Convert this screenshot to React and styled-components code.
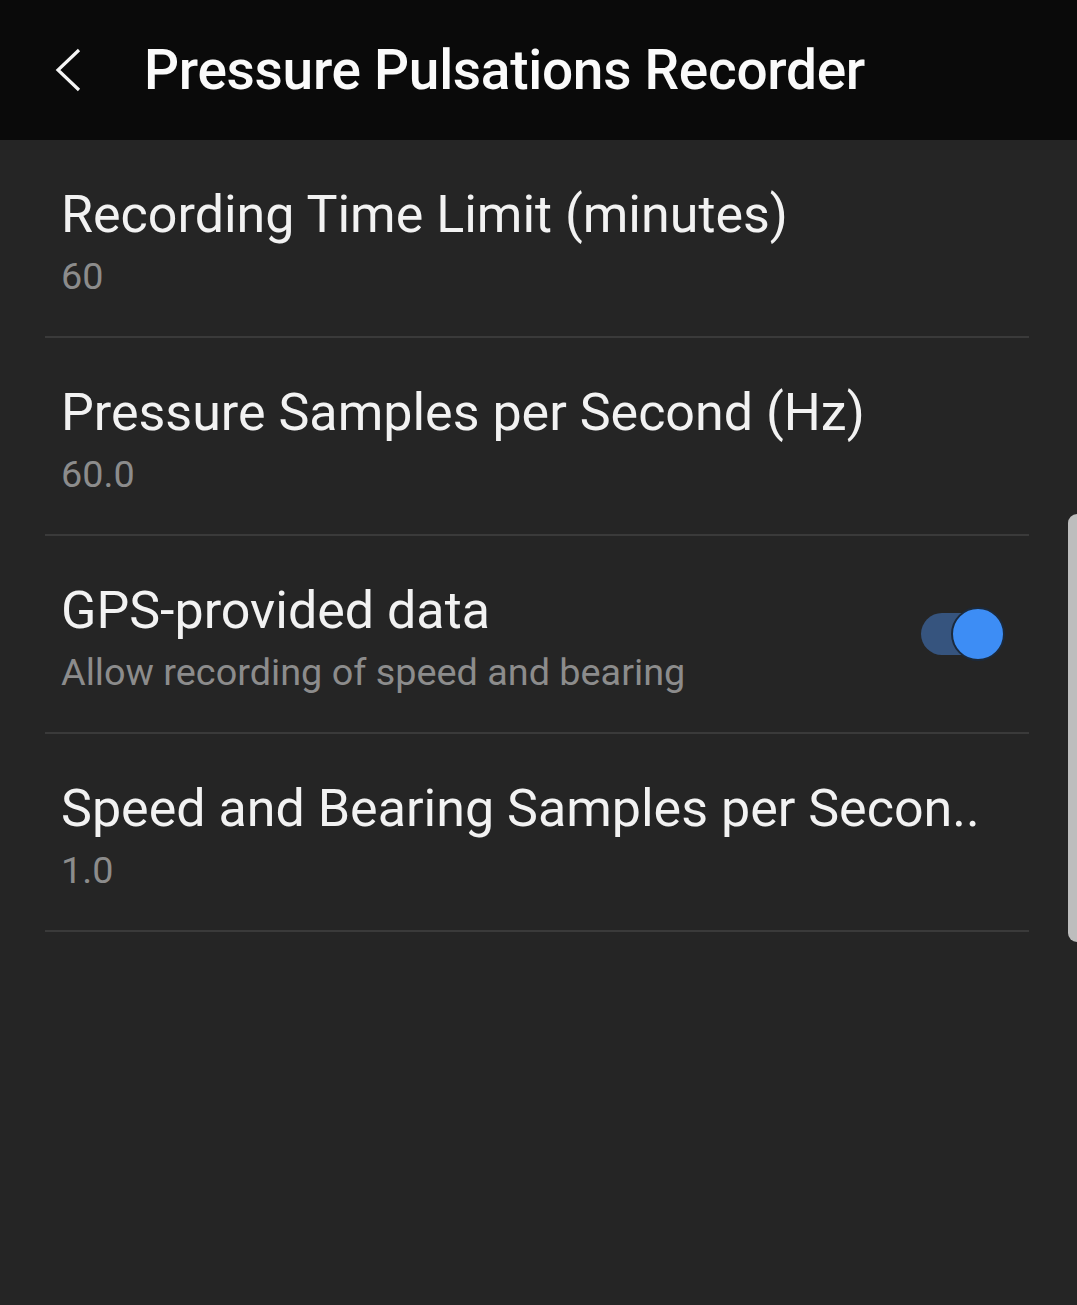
import React, { useState } from 'react'
import styled, { createGlobalStyle } from 'styled-components'

const GlobalStyle = createGlobalStyle`
  html, body {
    margin: 0;
    padding: 0;
    background: #252525;
  }
  body {
    font-family: Roboto, "Noto Sans", sans-serif;
  }
`

const Screen = styled.div`
  position: relative;
  width: 1077px;
  height: 1305px;
  background: #252525;
  overflow: hidden;
`

const TopBar = styled.header`
  display: flex;
  align-items: center;
  height: 140px;
  background: #0a0a0a;
  padding-left: 52px;
  box-sizing: border-box;
`

const BackButton = styled.button`
  display: flex;
  align-items: center;
  justify-content: center;
  width: 32px;
  height: 48px;
  padding: 0;
  border: none;
  background: none;
  margin-right: 60px;
`

const Title = styled.h1`
  margin: 0;
  color: #fafafa;
  font-size: 55px;
  font-weight: 500;
  letter-spacing: -0.3px;
`

const List = styled.div`
  display: flex;
  flex-direction: column;
  padding: 0 48px 0 45px;
`

const Row = styled.div`
  display: flex;
  align-items: center;
  justify-content: space-between;
  height: 198px;
  box-sizing: border-box;
  padding: 9px 24px 0 16px;
  border-bottom: 2px solid #3a3a3a;
`

const Texts = styled.div`
  display: flex;
  flex-direction: column;
  min-width: 0;
`

const Label = styled.div`
  color: #f2f2f2;
  font-size: 52px;
  line-height: 62px;
  white-space: nowrap;
`

const Value = styled.div`
  margin-top: 5px;
  color: #8c8c8c;
  font-size: 37.8px;
  line-height: 50px;
  white-space: nowrap;
`

const Switch = styled.button`
  position: relative;
  width: 84px;
  height: 56px;
  margin-bottom: 9px;
  padding: 0;
  border: none;
  background: none;
  flex-shrink: 0;
`

const Track = styled.span`
  position: absolute;
  left: 0;
  top: 7px;
  width: 74px;
  height: 42px;
  border-radius: 21px;
  background: ${p => (p.$on ? '#36547e' : '#555')};
`

const Thumb = styled.span`
  position: absolute;
  top: 1px;
  left: ${p => (p.$on ? '30px' : '0')};
  width: 50px;
  height: 50px;
  border-radius: 50%;
  background: ${p => (p.$on ? '#3d8df5' : '#bbb')};
  border: 2px solid #1b2a3d;
`

const ScrollBar = styled.div`
  position: absolute;
  right: 0;
  top: 514px;
  width: 9px;
  height: 428px;
  background: #bdbdbd;
  border-radius: 10px 0 0 10px;
`

const items = [
  { label: 'Recording Time Limit (minutes)', value: '60' },
  { label: 'Pressure Samples per Second (Hz)', value: '60.0' },
  { label: 'GPS-provided data', value: 'Allow recording of speed and bearing', toggle: true },
  { label: 'Speed and Bearing Samples per Secon..', value: '1.0' },
]

const App = () => {
  const [gps, setGps] = useState(true)

  return (
    <Screen>
      <GlobalStyle />
      <TopBar>
        <BackButton aria-label='Back'>
          <svg width='30' height='44' viewBox='0 0 30 44'>
            <path d='M26 2 L5 22 L26 42' fill='none' stroke='#f5f5f5' strokeWidth='3.2' />
          </svg>
        </BackButton>
        <Title>Pressure Pulsations Recorder</Title>
      </TopBar>
      <List>
        {items.map(item => (
          <Row key={item.label}>
            <Texts>
              <Label>{item.label}</Label>
              <Value>{item.value}</Value>
            </Texts>
            {item.toggle && (
              <Switch onClick={() => setGps(!gps)} aria-label={item.label}>
                <Track $on={gps} />
                <Thumb $on={gps} />
              </Switch>
            )}
          </Row>
        ))}
      </List>
      <ScrollBar />
    </Screen>
  )
}

export default App
